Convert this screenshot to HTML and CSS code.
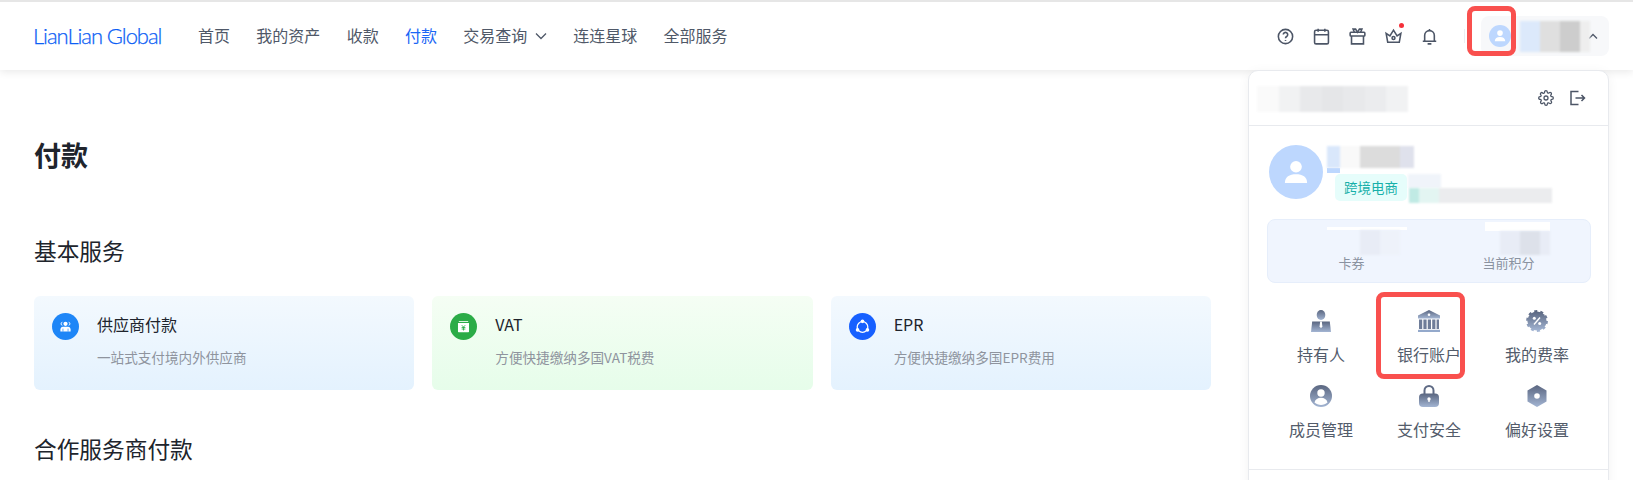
FILE: index.html
```html
<!DOCTYPE html>
<html lang="zh-CN">
<head>
<meta charset="utf-8">
<title>付款</title>
<link rel="stylesheet" href="styles.css">
</head>
<body>
<svg class="defs" width="0" height="0" aria-hidden="true">
  <defs>
    <linearGradient id="slate" x1="0" y1="0" x2="0" y2="1">
      <stop offset="0" stop-color="#5a6680"/>
      <stop offset="1" stop-color="#a3b5d3"/>
    </linearGradient>
  </defs>
</svg>

<header class="topbar">
  <div class="logo">LianLian Global</div>
  <nav class="nav">
    <a>首页</a>
    <a>我的资产</a>
    <a>收款</a>
    <a class="active">付款</a>
    <a class="has-caret">交易查询
      <svg class="caret" width="12" height="8" viewBox="0 0 12 8"><path d="M1 1.5 6 6.5 11 1.5" fill="none" stroke="#4f5868" stroke-width="1.3"/></svg>
    </a>
    <a>连连星球</a>
    <a>全部服务</a>
  </nav>
  <div class="tools">
    <svg class="tool" viewBox="0 0 20 20"><circle cx="10" cy="10" r="6.8"/><path d="M7.9 8.2a2.1 2.1 0 1 1 3.2 1.8c-.7.4-1.1.8-1.1 1.6"/><path d="M10 13.3v.9"/></svg>
    <svg class="tool" viewBox="0 0 20 20"><rect x="3.4" y="4" width="13.2" height="13" rx="1.4"/><path d="M3.4 8.4h13.2M6.8 2.500v3M13.200 2.500v3"/></svg>
    <svg class="tool" viewBox="0 0 20 20"><rect x="3" y="6" width="14" height="3.600" rx=".8"/><path d="M4.300 9.600V17h11.400V9.600M7 6 5.800 3h2.400L10 6l1.800-3h2.400L13 6"/></svg>
    <span class="tool-wrap">
      <svg class="tool" viewBox="0 0 20 20"><path d="M3 7l3.600 2.400L10 4l3.400 5.400L17 7l-1.500 8.500h-11z"/><circle cx="10" cy="11.400" r="1.400"/></svg>
      <i class="red-dot"></i>
    </span>
    <svg class="tool" viewBox="0 0 20 20"><path d="M5.400 14.600V9a4.600 4.600 0 0 1 9.200 0v5.600zM3.600 14.600h12.800M8.200 17h3.600M10 2.800v1.600"/></svg>
  </div>
  <span class="divider"></span>
  <div class="user-pill">
    <span class="avatar small">
      <svg viewBox="0 0 24 24" width="14" height="14"><circle cx="12" cy="7" r="4.800" fill="#fff"/><path d="M3 21c0-5 3.500-7.500 9-7.500s9 2.500 9 7.500z" fill="#fff"/></svg>
    </span>
    <div class="mosaic pill-name"><i class="c-blue"></i><i class="c-g1"></i><i class="c-g2"></i><i class="c-g3 narrow"></i></div>
    <svg class="pill-caret" width="10" height="7" viewBox="0 0 10 7"><path d="M1 5.500 5 1.500 9 5.500" fill="none" stroke="#4f5868" stroke-width="1.300"/></svg>
  </div>
</header>

<main class="page">
  <h1 class="page-title">付款</h1>
  <h2 class="section-title">基本服务</h2>
  <section class="cards">
    <article class="card">
      <span class="badge b-blue">
        <svg viewBox="0 0 20 20" width="17" height="17"><circle cx="10" cy="6.800" r="2.500" fill="#fff"/><path d="M4.800 6.800a1.800 1.800 0 0 1 1.500-1.800M15.200 6.800a1.800 1.800 0 0 0-1.500-1.800M4.800 6.800a1.800 1.800 0 0 0 1.500 1.800M15.200 6.800a1.800 1.800 0 0 1-1.500 1.800" stroke="#fff" stroke-width="1.100" fill="none"/><path d="M4 16v-2.500c0-2 1.300-3.300 3-3.300h6c1.700 0 3 1.300 3 3.300V16z" fill="#fff"/><path d="M7 12.500V16M13 12.500V16" stroke="#1e86f7" stroke-width=".8"/></svg>
      </span>
      <div class="card-text">
        <div class="card-title">供应商付款</div>
        <div class="card-sub">一站式支付境内外供应商</div>
      </div>
    </article>
    <article class="card green">
      <span class="badge b-green">
        <svg viewBox="0 0 20 20" width="17" height="17"><path d="M4.500 3.500h11v1h-11z" fill="#fff"/><path d="M3.500 5.800h13V16a.800.800 0 0 1-.8.800H4.300a.800.800 0 0 1-.8-.8z" fill="#fff"/><path d="M8 8.500l2 2.200 2-2.200M7.800 11.200h4.400M7.800 13h4.400M10 10.700v4" stroke="#2bac47" stroke-width="1" fill="none"/></svg>
      </span>
      <div class="card-text">
        <div class="card-title">VAT</div>
        <div class="card-sub">方便快捷缴纳多国VAT税费</div>
      </div>
    </article>
    <article class="card">
      <span class="badge b-royal">
        <svg viewBox="0 0 20 20" width="19" height="19"><circle cx="10" cy="10.500" r="5.600" fill="none" stroke="#fff" stroke-width="1.300"/><circle cx="10" cy="4.600" r="1.900" fill="#fff"/><circle cx="4.800" cy="13.600" r="1.900" fill="#fff"/><circle cx="15.200" cy="13.600" r="1.900" fill="#fff"/></svg>
      </span>
      <div class="card-text">
        <div class="card-title">EPR</div>
        <div class="card-sub">方便快捷缴纳多国EPR费用</div>
      </div>
    </article>
  </section>
  <h2 class="section-title next">合作服务商付款</h2>
</main>

<aside class="panel">
  <div class="panel-head">
    <div class="mosaic head-name"><i class="h1"></i><i class="h2"></i><i class="h3"></i><i class="h4"></i><i class="h3"></i><i class="h5"></i><i class="h2"></i></div>
    <div class="panel-actions">
      <svg class="tool" viewBox="0 0 24 24"><circle cx="12" cy="12" r="3"/><path d="M19.400 15a1.650 1.650 0 0 0 .33 1.820l.06.06a2 2 0 1 1-2.830 2.830l-.06-.06a1.650 1.650 0 0 0-2.800 1.170V21a2 2 0 1 1-4 0v-.09a1.650 1.650 0 0 0-2.800-1.170l-.06.06a2 2 0 1 1-2.830-2.830l.06-.06a1.650 1.650 0 0 0-1.170-2.800H3a2 2 0 1 1 0-4h.09a1.650 1.650 0 0 0 1.170-2.800l-.06-.06a2 2 0 1 1 2.830-2.830l.06.06a1.650 1.650 0 0 0 2.800-1.170V3a2 2 0 1 1 4 0v.09a1.650 1.650 0 0 0 2.800 1.170l.06-.06a2 2 0 1 1 2.830 2.830l-.06.06a1.650 1.650 0 0 0 1.170 2.800H21a2 2 0 1 1 0 4h-.09a1.650 1.650 0 0 0-1.510 1z"/></svg>
      <svg class="tool" viewBox="0 0 20 20"><path d="M11.500 3.500H4v13h7.500M8.500 10h9M14.500 7l3 3-3 3"/></svg>
    </div>
  </div>
  <div class="profile">
    <span class="avatar large">
      <svg viewBox="0 0 24 24" width="28" height="28"><circle cx="12" cy="7.500" r="5" fill="#fff"/><path d="M2.500 21.500c0-5.300 3.800-7.500 9.500-7.500s9.500 2.200 9.500 7.500z" fill="#fff"/></svg>
    </span>
    <div class="profile-info">
      <div class="mosaic profile-name"><i class="p1"></i><i class="p2"></i><i class="p3"></i><i class="p3"></i><i class="p4"></i></div>
      <div class="name-strip"></div>
      <div class="profile-row">
        <span class="tag">跨境电商</span>
        <div class="profile-extra">
          <div class="mosaic extra-top"></div>
          <div class="mosaic profile-id"><i class="d1"></i><i class="d2"></i><i class="d3"></i></div>
        </div>
      </div>
    </div>
  </div>
  <div class="stats">
    <div class="stat first">
      <span class="stat-bar"></span>
      <div class="mosaic stat-val"><i class="s1"></i><i class="s2"></i></div>
      <div class="stat-label">卡券</div>
    </div>
    <div class="stat second">
      <span class="stat-bar"></span>
      <div class="mosaic stat-val"><i class="s1"></i><i class="s3"></i><i class="s1 thin"></i></div>
      <div class="stat-label">当前积分</div>
    </div>
  </div>
  <div class="shortcuts">
    <div class="shortcut">
      <svg class="sc-icon" viewBox="0 0 22 22"><ellipse cx="11" cy="5" rx="4.300" ry="5" fill="url(#slate)"/><path d="M1 22l1.200-10.500h17.600L21 22z" fill="url(#slate)"/><path d="M10.200 11.500h1.600l.6 5-1.400 1.800-1.400-1.800z" fill="#fff"/></svg>
      <span>持有人</span>
    </div>
    <div class="shortcut">
      <svg class="sc-icon" viewBox="0 0 22 22"><path d="M11 0 22 5.500v3H0v-3z" fill="url(#slate)"/><path d="M1 9.500h3.200V19H1zM5.400 9.500h3.200V19H5.400zM9.800 9.500H13V19H9.800zM14.200 9.500h3.200V19h-3.200zM18.600 9.500h2.400V19h-2.400z" fill="#6f7d99"/><path d="M0 19.800h22V22H0z" fill="#94a9cb"/><circle cx="11" cy="4.800" r="1.300" fill="#fff"/></svg>
      <span>银行账户</span>
    </div>
    <div class="shortcut">
      <svg class="sc-icon" viewBox="0 0 22 22"><circle class="scallop" cx="11" cy="11" r="9.600"/><circle cx="8.300" cy="8.200" r="1.500" fill="#fff"/><circle cx="13.700" cy="13.600" r="1.500" fill="#fff"/><path d="M14 7.500 8 14.500" stroke="#fff" stroke-width="1.400"/></svg>
      <span>我的费率</span>
    </div>
    <div class="shortcut">
      <svg class="sc-icon" viewBox="0 0 22 22"><circle cx="11" cy="11" r="11" fill="url(#slate)"/><circle cx="11" cy="8" r="3.700" fill="#fff"/><path d="M4.500 17.500c.8-3.200 3.300-4.700 6.500-4.700s5.700 1.500 6.500 4.700c-1.700 1.600-4 2.500-6.500 2.500s-4.800-.9-6.500-2.500z" fill="#fff"/></svg>
      <span>成员管理</span>
    </div>
    <div class="shortcut">
      <svg class="sc-icon" viewBox="0 0 22 22"><path d="M6.500 10V5.500a4.500 4.500 0 0 1 9 0V10" fill="none" stroke="#5f6b85" stroke-width="2"/><rect x="1" y="8.500" width="20" height="13.500" rx="4" fill="url(#slate)"/><circle cx="11" cy="14" r="1.700" fill="#fff"/><path d="M10.300 14h1.400v3h-1.400z" fill="#fff"/></svg>
      <span>支付安全</span>
    </div>
    <div class="shortcut">
      <svg class="sc-icon" viewBox="0 0 22 22"><path d="M11 0l9.500 5.500v11L11 22l-9.500-5.500v-11z" fill="url(#slate)"/><circle cx="11" cy="11" r="2.800" fill="#fff"/></svg>
      <span>偏好设置</span>
    </div>
  </div>
</aside>

<div class="annot annot-avatar"></div>
<div class="annot annot-bank"></div>

<svg class="watermark" width="1633" height="480" aria-hidden="true">
  <g class="wm-text">
    <text transform="translate(-14 50) rotate(-20)">2025/12/02 10:47-jincj</text>
    <text transform="translate(394 60) rotate(-20)">2025/12/02 10:47-jincj</text>
    <text transform="translate(802 70) rotate(-20)">2025/12/02 10:47-jincj</text>
    <text transform="translate(1210 80) rotate(-20)">2025/12/02 10:47-jincj</text>
    <text transform="translate(37 193) rotate(-20)">2025/12/02 10:47-jincj</text>
    <text transform="translate(445 203) rotate(-20)">2025/12/02 10:47-jincj</text>
    <text transform="translate(853 213) rotate(-20)">2025/12/02 10:47-jincj</text>
    <text transform="translate(1261 223) rotate(-20)">2025/12/02 10:47-jincj</text>
    <text transform="translate(88 336) rotate(-20)">2025/12/02 10:47-jincj</text>
    <text transform="translate(496 346) rotate(-20)">2025/12/02 10:47-jincj</text>
    <text transform="translate(904 356) rotate(-20)">2025/12/02 10:47-jincj</text>
    <text transform="translate(1312 366) rotate(-20)">2025/12/02 10:47-jincj</text>
    <text transform="translate(139 479) rotate(-20)">2025/12/02 10:47-jincj</text>
    <text transform="translate(547 489) rotate(-20)">2025/12/02 10:47-jincj</text>
    <text transform="translate(955 499) rotate(-20)">2025/12/02 10:47-jincj</text>
    <text transform="translate(1363 509) rotate(-20)">2025/12/02 10:47-jincj</text>
  </g>
</svg>
</body>
</html>
```

FILE: styles.css
```css
* { box-sizing: border-box; }
html, body { margin: 0; padding: 0; }
body {
  position: relative;
  width: 1633px;
  height: 480px;
  overflow: hidden;
  background: #fff;
  font-family: "Noto Sans CJK SC", "Open Sans", sans-serif;
  color: #20242c;
}
.defs { position: absolute; }

/* top bar */
.topbar {
  display: flex;
  align-items: center;
  height: 70px;
  padding: 0 24px 0 33px;
  border-top: 2px solid #e6e6e6;
  background: #fff;
  box-shadow: 0 2px 8px rgba(0, 0, 0, .09);
}
.logo {
  width: 129px;
  margin: 0 36px 2px 0;
  font-family: "Lato", "Open Sans", sans-serif;
  font-weight: 300;
  font-size: 22px;
  letter-spacing: -1.05px;
  color: #0d5ff5;
  -webkit-text-stroke: .25px #0d5ff5;
  white-space: nowrap;
}
.nav { display: flex; align-items: center; gap: 26.3px; margin-bottom: 2px; font-size: 16px; color: #4f5868; }
.nav a { display: flex; align-items: center; line-height: 22px; }
.nav .active { color: #1a66f5; }
.caret { margin-left: 7.7px; margin-top: 1px; }
.tools {
  display: flex;
  align-items: center;
  gap: 15px;
  margin-left: auto;
}
.tool {
  display: block;
  width: 21px;
  height: 21px;
  fill: none;
  stroke: #4c5566;
  stroke-width: 1.5;
}
.tool-wrap { position: relative; display: block; }
.red-dot {
  position: absolute;
  top: -3px;
  right: 0;
  width: 5px;
  height: 5px;
  border-radius: 50%;
  background: #f5303a;
}
.divider { width: 1px; height: 14px; margin-left: 24px; background: #eceef1; }
.user-pill {
  display: flex;
  align-items: center;
  width: 128px;
  height: 40px;
  margin-left: 16px;
  padding-left: 8px;
  border-radius: 8px;
  background: #f7f8fa;
}
.avatar {
  display: flex;
  align-items: center;
  justify-content: center;
  flex: none;
  border-radius: 50%;
  background: #bdd7fe;
}
.avatar.small { width: 22px; height: 22px; }
.avatar.large { width: 54px; height: 54px; }
.pill-caret { margin-left: -2px; }

/* mosaics that hide personal data */
.mosaic { display: flex; filter: blur(1px); }
.mosaic i { display: block; }
.pill-name { height: 31px; margin-left: 9px; }
.pill-name i { width: 20px; }
.pill-name .narrow { width: 10px; }
.c-blue { background: #dce9fb; }
.c-g1 { background: #dfdfdf; }
.c-g2 { background: #cdcdcd; }
.c-g3 { background: #eeeeee; }

/* main content */
.page { width: 1211px; padding: 65px 0 0 34px; }
.page-title { margin: 0 0 60px; font-size: 27px; font-weight: 700; line-height: 40px; color: #20242c; }
.section-title { margin: 0 0 29px; font-size: 22.700px; font-weight: 400; line-height: 32px; color: #20242c; }
.section-title.next { margin-top: 43px; }
.cards { display: grid; grid-template-columns: repeat(3, 1fr); gap: 18px; }
.card {
  display: flex;
  height: 94px;
  padding: 17px 0 0 18px;
  border-radius: 6px;
  background: linear-gradient(#f3f9fe, #e4f2fe);
}
.card.green { background: linear-gradient(#f5fef4, #e6fdea); }
.badge {
  display: flex;
  align-items: center;
  justify-content: center;
  flex: none;
  width: 27px;
  height: 27px;
  border-radius: 50%;
}
.b-blue { background: #1e86f7; }
.b-green { background: #2bac47; }
.b-royal { background: #1760ff; }
.card-text { margin-left: 18px; }
.card-title { font-size: 16px; line-height: 22px; color: #20242c; }
.card-sub { margin-top: 11px; font-size: 13.600px; line-height: 22px; color: #8f949e; }

/* account dropdown */
.panel {
  position: absolute;
  top: 70px;
  left: 1248px;
  width: 361px;
  height: 420px;
  border: 1px solid #e8eaee;
  border-radius: 10px 10px 0 0;
  background: #fff;
  box-shadow: 0 2px 12px rgba(0, 0, 0, .05);
}
.panel-head {
  display: flex;
  align-items: center;
  justify-content: space-between;
  height: 55px;
  padding: 0 21px 0 8px;
  border-bottom: 1px solid #e8eaee;
}
.panel-actions { display: flex; gap: 10px; align-items: center; }
.panel-actions .tool { width: 20px; height: 20px; }
.panel-actions .tool:first-child { width: 16px; height: 16px; stroke-width: 1.900; margin-right: 3px; }
.head-name { height: 26px; margin-top: 1px; }
.head-name i { width: 21.500px; }
.h1 { background: #fafafa; }
.h2 { background: #f1f2f3; }
.h3 { background: #e8e9eb; }
.h4 { background: #e5e6e8; }
.h5 { background: #ebecee; }
.profile { display: flex; height: 93px; padding: 19px 0 0 20px; }
.profile-info { margin-left: 4px; margin-top: 1px; }
.profile-name { width: 87px; height: 22px; }
.profile-name i { width: 20px; }
.profile-name .p1 { width: 13px; }
.profile-name .p4 { width: 14px; }
.p1 { background: #d9e7fb; }
.p2 { background: #f9f9f9; }
.p3 { background: #dcdcdc; }
.p4 { background: #dfe1ec; }
.name-strip { width: 13px; height: 5px; margin-bottom: 1px; background: #bdd7fe; }
.profile-row { display: flex; margin-left: 8px; }
.tag {
  flex: none;
  width: 72px;
  height: 27px;
  border-radius: 5px;
  background: #e6fdfb;
  color: #17b0aa;
  font-size: 13.500px;
  line-height: 26px;
  text-align: center;
}
.profile-extra { margin-left: 1px; }
.extra-top { width: 33px; height: 14px; background: #f0f4fa; }
.profile-id { height: 15px; margin-left: 1px; }
.d1 { width: 10px; background: #c0eae4; }
.d2 { width: 20px; background: #e3f5f2; }
.d3 { width: 113px; background: #ebecee; }
.stats {
  display: grid;
  grid-template-columns: 157px 157px;
  height: 64px;
  margin: 0 17px 0 18px;
  padding-left: 5px;
  border: 1px solid #e6eefb;
  border-radius: 8px;
  background: #f0f5fe;
}
.stat-bar { display: block; background: #fff; filter: blur(.4px); }
.stat-val { height: 25px; }
.stat.first { padding-top: 7px; }
.first .stat-bar { width: 80px; height: 3px; margin-left: 54px; }
.first .stat-val { margin-left: 87px; }
.stat.second { padding-top: 2px; }
.second .stat-bar { width: 65px; height: 9px; margin-left: 55px; }
.second .stat-val { margin-left: 70px; height: 24px; }
.stat-val i { width: 20px; }
.stat-val .thin { width: 10px; }
.s1 { background: #e8ecf6; }
.s2 { background: #eef2fa; }
.s3 { background: #dde1ea; }
.stat-label { font-size: 13px; line-height: 16px; text-align: center; color: #8a92a0; }
.shortcuts {
  display: grid;
  grid-template-columns: repeat(3, 108px);
  row-gap: 20px;
  padding: 27px 0 29px 18px;
  border-bottom: 1px solid #e8eaee;
}
.shortcut {
  display: flex;
  flex-direction: column;
  align-items: center;
  gap: 11px;
  font-size: 16px;
  line-height: 22px;
  color: #535c6b;
}
.sc-icon { display: block; width: 22px; height: 22px; }
.scallop { fill: url(#slate); stroke: url(#slate); stroke-width: 2.600; stroke-dasharray: 3 3.030; }

/* red annotation frames drawn on the screenshot */
.annot {
  position: absolute;
  border: 5px solid #f9504e;
  border-radius: 8px;
}
.annot-avatar { top: 6px; left: 1467px; width: 49px; height: 50px; }
.annot-bank { top: 292px; left: 1376px; width: 89px; height: 87px; }

/* tiled watermark */
.watermark { position: absolute; top: 0; left: 0; pointer-events: none; }
.wm-text {
  font-family: "Liberation Sans", sans-serif;
  font-size: 22px;
  fill: rgba(0, 0, 0, .016);
}
```
